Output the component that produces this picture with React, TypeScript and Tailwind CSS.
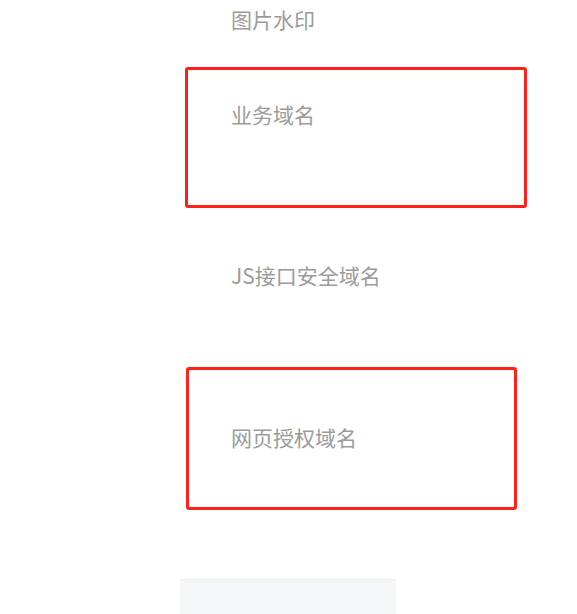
const font = { fontFamily: '"Microsoft YaHei", "Noto Sans CJK SC", "Noto Sans", sans-serif' };

function Label({ text }: { text: string }) {
  return <div className="text-[21px] leading-[28px] text-[#9b9b9b]">{text}</div>;
}

export default function App() {
  return (
    <div className="w-[577px] h-[614px] bg-white overflow-hidden flex flex-col *:shrink-0" style={font}>
      <div className="pl-[231px] pt-[5px]">
        <Label text="图片水印" />
      </div>

      <div className="ml-[185px] mt-[34px] w-[342px] h-[141px] border-[3px] border-[#ff2119] rounded-[3px] pl-[43px] pt-[30px]">
        <Label text="业务域名" />
      </div>

      <div className="pl-[231px] mt-[53px]">
        <Label text="JS接口安全域名" />
      </div>

      <div className="ml-[186px] mt-[78px] w-[331px] h-[143px] border-[3px] border-[#ff2119] rounded-[3px] pl-[42px] pt-[53px]">
        <Label text="网页授权域名" />
      </div>

      <div className="ml-[180px] mt-[69px] w-[216px] h-[40px] bg-[#f5f6f8] border-t border-[#efefef]" />
    </div>
  );
}
